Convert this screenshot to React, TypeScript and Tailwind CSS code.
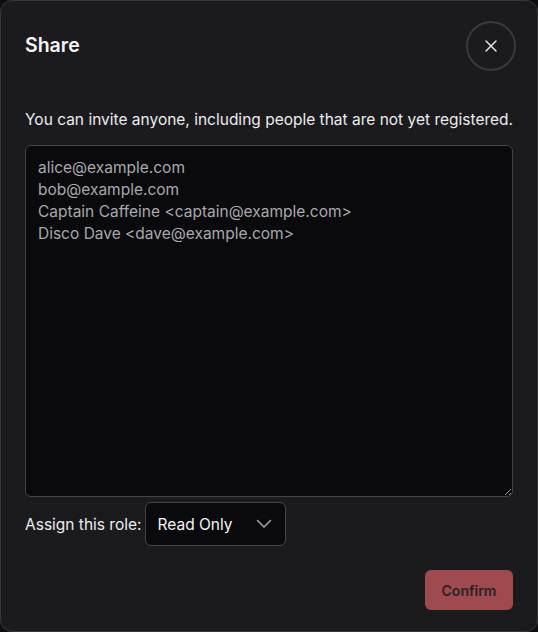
import { X } from "lucide-react"

const invitees = [
  "alice@example.com",
  "bob@example.com",
  "Captain Caffeine <captain@example.com>",
  "Disco Dave <dave@example.com>",
]

export default function App() {
  return (
    <div
      className="h-[632px] w-[538px] bg-[#0e0e10]"
      style={{ fontFamily: "Inter, 'Noto Sans', sans-serif" }}
    >
      <div className="flex h-full flex-col rounded-xl border border-[#38383c] bg-[#1b1b1e] px-6 pb-[21px] pt-[20px]">
        {/* header */}
        <div className="flex items-center justify-between">
          <h2 className="text-[19.5px] font-semibold text-[#f4f4f5]">Share</h2>
          <button className="-mr-[3px] flex h-[50px] w-[50px] items-center justify-center rounded-full border-2 border-[#3a3a3e] text-[#e4e4e7]">
            <X className="h-5 w-5" strokeWidth={1.75} />
          </button>
        </div>

        <p className="mt-[37px] text-[15.5px] text-[#ececee]">
          You can invite anyone, including people that are not yet registered.
        </p>

        <textarea
          className="mt-[14px] h-[352px] w-full resize-y rounded-md border border-[#44444a] bg-[#0a0a0c] px-3 py-[11px] text-[15.5px] leading-[22px] text-[#a8a8ae] outline-none"
          defaultValue={invitees.join("\n")}
        />

        <div className="mt-[5px] flex items-center gap-[3px]">
          <span className="text-[15.5px] text-[#ececee]">Assign this role:</span>
          <div className="flex h-[44px] w-[141px] items-center justify-between rounded-md border border-[#44444a] bg-[#0a0a0c] pl-3 pr-[13px]">
            <span className="text-[15.5px] text-[#f4f4f5]">Read Only</span>
            <svg width="16" height="10" viewBox="0 0 16 10" fill="none" className="text-[#a1a1aa]">
              <polyline points="1.5,1.5 8,8 14.5,1.5" stroke="currentColor" strokeWidth="1.6" strokeLinecap="round" strokeLinejoin="round" />
            </svg>
          </div>
        </div>

        <div className="mt-auto flex justify-end">
          <button className="h-[40px] w-[88px] rounded-md bg-[#9e4a4f] text-[14px] font-semibold text-[#2a2225]">
            Confirm
          </button>
        </div>
      </div>
    </div>
  )
}
